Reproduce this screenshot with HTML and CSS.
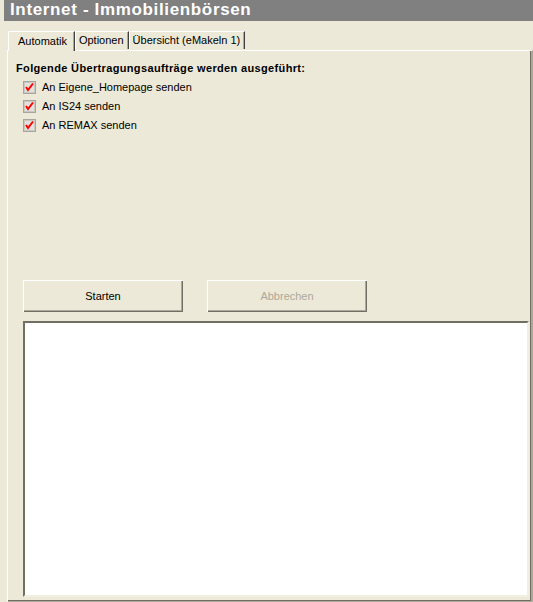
FILE: index.html
```html
<!DOCTYPE html>
<html>
<head>
  <meta charset="utf-8">
  <title>Internet - Immobilienbörsen</title>
  <link rel="stylesheet" href="styles.css">
</head>
<body>
  <div class="titlebar">Internet - Immobilienbörsen</div>

  <div class="tabs">
    <div class="tab active">Automatik</div>
    <div class="tab">Optionen</div>
    <div class="tab">Übersicht (eMakeln 1)</div>
  </div>

  <div class="panel">
    <div class="heading">Folgende Übertragungsaufträge werden ausgeführt:</div>
    <div class="checks">
      <label class="check"><svg width="13" height="13" viewBox="0 0 13 13"><rect x="0.5" y="0.5" width="12" height="12" fill="#d4d3ce" stroke="#a6a59e"/><rect x="1.5" y="1.5" width="10" height="10" fill="#e2e1dc" stroke="#c9c8c1"/><path d="M3 6 L5 9 L10 2.5" fill="none" stroke="#ff0000" stroke-width="2"/></svg>An Eigene_Homepage senden</label>
      <label class="check"><svg width="13" height="13" viewBox="0 0 13 13"><rect x="0.5" y="0.5" width="12" height="12" fill="#d4d3ce" stroke="#a6a59e"/><rect x="1.5" y="1.5" width="10" height="10" fill="#e2e1dc" stroke="#c9c8c1"/><path d="M3 6 L5 9 L10 2.5" fill="none" stroke="#ff0000" stroke-width="2"/></svg>An IS24 senden</label>
      <label class="check"><svg width="13" height="13" viewBox="0 0 13 13"><rect x="0.5" y="0.5" width="12" height="12" fill="#d4d3ce" stroke="#a6a59e"/><rect x="1.5" y="1.5" width="10" height="10" fill="#e2e1dc" stroke="#c9c8c1"/><path d="M3 6 L5 9 L10 2.5" fill="none" stroke="#ff0000" stroke-width="2"/></svg>An REMAX senden</label>
    </div>

    <div class="buttons">
      <button class="btn">Starten</button>
      <button class="btn" disabled>Abbrechen</button>
    </div>

    <div class="log"></div>
  </div>
</body>
</html>
```

FILE: styles.css
```css
html, body { margin: 0; padding: 0; background: #ece9d8; }
body { font-family: "Liberation Sans", Arial, sans-serif; font-size: 11px; color: #000; width: 533px; height: 602px; overflow: hidden; }

.titlebar { margin-left: 4px; height: 21px; background: #808080; color: #fff; font-weight: bold; font-size: 17px; line-height: 20px; padding-left: 6px; letter-spacing: 0.65px; }

.tabs { display: flex; align-items: flex-end; margin: 8px 0 0 8px; height: 21px; position: relative; z-index: 1; }
.tab { height: 17px; line-height: 17px; padding: 0 4px 0 3px; border-top: 1px solid #fff; border-left: 1px solid #fff; border-right: 1px solid #404040; box-shadow: inset -1px 0 #aca899; margin-bottom: 1px; }
.tab.active { height: 19px; line-height: 19px; padding: 0 7px 0 9px; margin-bottom: -1px; background: #ece9d8; border-top-left-radius: 2px; }

.panel { margin-left: 7px; height: 550px; border-top: 1px solid #fff; border-left: 1px solid #fff; border-right: 2px solid #aca899; border-bottom: 2px solid #aca899; box-shadow: inset -1px -1px #716f64; padding: 0 0 0 15px; }

.heading { font-weight: bold; margin: 11px 0 0 -7px; height: 13px; line-height: 13px; letter-spacing: 0.35px; }

.checks { display: flex; flex-direction: column; gap: 6px; margin-top: 6px; }
.check { display: flex; align-items: center; gap: 6px; height: 13px; line-height: 13px; }
.check svg { flex: none; }

.buttons { display: flex; gap: 24px; margin-top: 148px; }
.btn { width: 160px; height: 32px; background: #ece9d8; font: inherit; color: #000; border: none; padding: 0; box-shadow: inset 1px 1px #fff, inset -1px -1px #716f64, inset -2px -2px #aca899; }
.btn:disabled { color: #aca899; }

.log { margin-top: 9px; width: 502px; height: 272px; background: #fff; border-top: 2px solid #716f64; border-left: 2px solid #716f64; border-right: 2px solid #f1efe2; border-bottom: 2px solid #f1efe2; box-shadow: inset -1px -1px #fff; }
```
